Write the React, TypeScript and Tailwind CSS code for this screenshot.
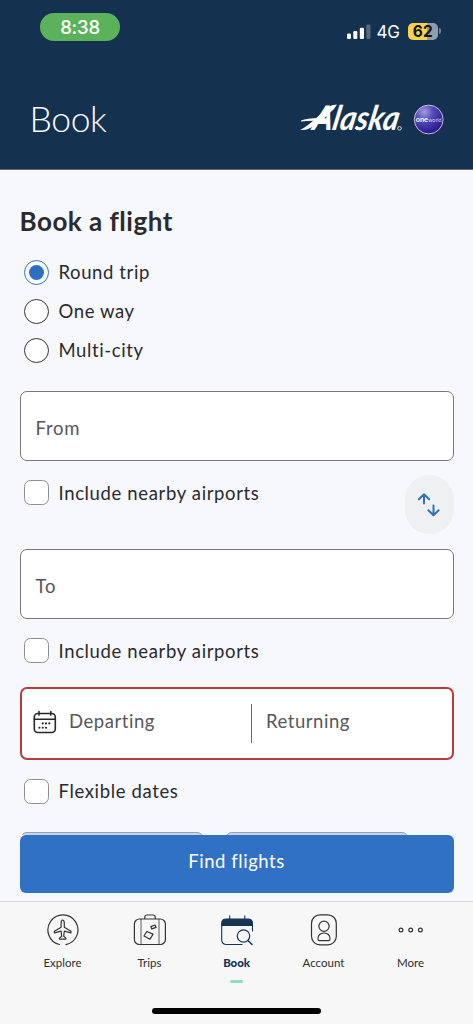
import React from 'react';

function StatusBar() {
  return (
    <div className="flex h-[64px] items-start justify-between pl-[40px] pr-[32px] pt-[13px]">
      <div className="flex h-[28px] w-[80px] items-center justify-center rounded-full bg-[#5bb25a] pt-[1px] font-['Inter'] text-[18.5px] font-medium tracking-[-0.2px] text-white">
        8:38
      </div>
      <div className="flex items-center pt-[7px]">
        <svg width="24" height="16" viewBox="0 0 24 16" className="mt-[1px]">
          <rect x="0" y="9.5" width="4" height="5.5" rx="1.2" fill="#fff" />
          <rect x="6.3" y="7" width="4" height="8" rx="1.2" fill="#fff" />
          <rect x="12.8" y="3.8" width="4.2" height="11.2" rx="1.2" fill="#fff" />
          <rect x="19.3" y="0.5" width="4.2" height="14.5" rx="1.2" fill="#fff" opacity=".28" />
        </svg>
        <span className="ml-[6px] mt-[2px] w-[25px] font-['Inter'] text-[17px] leading-[20px] tracking-[-0.2px] text-white">4G</span>
        <div className="ml-[6px] flex h-[17px] w-[30.5px] items-center justify-center rounded-[5px] bg-[linear-gradient(90deg,#f6d34b_62%,#929da9_62%)] pt-[1px] font-['Inter'] text-[15.5px] font-bold leading-none text-[#111]">
          62
        </div>
        <div className="ml-[1px] h-[6px] w-[2px] rounded-r-full bg-[#71808f]" />
      </div>
    </div>
  );
}

function Logo() {
  return (
    <svg width="146" height="60" viewBox="0 -10 146 60" className="-my-[10px] shrink-0">
      <defs>
        <radialGradient id="globe" cx="35%" cy="24%" r="80%">
          <stop offset="0" stopColor="#a49ddf" />
          <stop offset=".4" stopColor="#5548b6" />
          <stop offset="1" stopColor="#221389" />
        </radialGradient>
      </defs>
      <path d="M0 30 C10 25 19 15 27 8 Q32 4.6 37 4.6 L34 9 C26 16 18 26 6 29.8Z" fill="#fff" />
      <path d="M1 20.5 Q10 16.8 30 18.5 V22 Q15 20 1 21.5Z" fill="#fff" />
      <text transform="translate(11.5 29.8) skewX(-11)" x="0" y="0" textLength="86" lengthAdjust="spacingAndGlyphs" fontFamily="Lato" fontSize="34" fontStyle="italic" fontWeight="700" fill="#fff">
        Alaska
      </text>
      <circle cx="99.5" cy="28.3" r="1.8" fill="none" stroke="#fff" strokeWidth=".8" />
      <circle cx="128.7" cy="19.5" r="14.4" fill="url(#globe)" stroke="#c3bfdf" strokeWidth="1" />
      <text x="115.8" y="21.5" textLength="12.2" lengthAdjust="spacingAndGlyphs" fontFamily="Lato" fontSize="6.5" fontWeight="700" fill="#fff">one</text>
      <text x="128.2" y="21.5" textLength="13.4" lengthAdjust="spacingAndGlyphs" fontFamily="Lato" fontSize="6.5" fill="#d4d0f3">world</text>
    </svg>
  );
}

function Radio({ label, checked = false }: { label: string; checked?: boolean }) {
  return (
    <label className="flex h-[39px] items-center gap-[10px] pl-[4px]">
      <span className={`flex size-[25px] items-center justify-center rounded-full border-[1.5px] bg-white ${checked ? 'border-[#3373bf]' : 'border-[#343437]'}`}>
        {checked && <span className="size-[15px] rounded-full bg-[#2d6fc3]" />}
      </span>
      <span className="text-[18.5px] leading-[24px] tracking-[0.6px] text-[#2b2b2e]">{label}</span>
    </label>
  );
}

function Check({ label }: { label: string }) {
  return (
    <label className="flex h-[25px] items-center gap-[10px] pl-[4px]">
      <span className="size-[25px] rounded-[6.5px] border border-[#8d8e93] bg-white" />
      <span className="text-[18.5px] leading-[24px] tracking-[0.64px] text-[#2b2b2e]">{label}</span>
    </label>
  );
}

function Field({ label }: { label: string }) {
  return (
    <div className="flex h-[70px] items-center rounded-[7px] border-[1.5px] border-[#77787d] bg-white px-[15px] pt-[5px] text-[18.5px] tracking-[0.75px] text-[#56575b]">
      {label}
    </div>
  );
}

function CalendarIcon() {
  return (
    <svg width="24" height="24" viewBox="0 0 24 24" fill="none" stroke="#28282b" strokeWidth="1.6" strokeLinecap="round" className="-mt-[2px]">
      <rect x="1.3" y="3.5" width="21" height="19" rx="3.5" />
      <path d="M1.3 9.2h21M6 1.5v3.6M17.8 1.5v3.6" />
      <path d="M9.7 13.4h.01M13 13.4h.01M16.3 13.4h.01M6.4 17.7h.01M9.7 17.7h.01M13 17.7h.01" strokeWidth="2.1" />
    </svg>
  );
}

function ExploreIcon() {
  return (
    <svg width="34" height="34" viewBox="0 0 34 34" fill="none" stroke="#343437" strokeWidth="1.2" strokeLinejoin="round">
      <path d="M13.4 31.5 A15 15 0 1 1 20 31.6" strokeLinecap="round" />
      <path d="M16.7 7c1.1 0 1.6 1.8 1.6 3.6v3.6l6.7 4v1.6l-6.7-1.6-.6 5 2.2 1.9v1h-6.4v-1l2.2-1.9-.6-5-6.7 1.6v-1.6l6.7-4v-3.6c0-1.8.5-3.6 1.6-3.6Z" />
    </svg>
  );
}

function TripsIcon() {
  return (
    <svg width="34" height="34" viewBox="0 0 34 34" fill="none" stroke="#343437" strokeWidth="1.2">
      <rect x="1.4" y="6" width="31" height="25.5" rx="5" />
      <path d="M11.8 6V4a2 2 0 0 1 2-2h6.4a2 2 0 0 1 2 2v2" />
      <path d="M8 6v25.5M26 6v25.5" strokeWidth=".8" />
      <path d="M13.8 18.5l6.2 2.6-3 5.2-6-3.3ZM17.8 13.6l4.2-1.6 1.1 2.4-4.3 1.5Z" strokeLinejoin="round" />
    </svg>
  );
}

function BookIcon() {
  return (
    <svg width="34" height="34" viewBox="0 0 34 34" fill="none" stroke="#163454" strokeWidth="1.1" strokeLinecap="round">
      <path d="M1.7 12.5V10.5Q1.7 6 6.2 6H28Q32.5 6 32.5 10.5V12.5Z" fill="#163454" />
      <path d="M9.7 2.8V6M24.8 2.8V6M1.7 12v14.5q0 5 5 5H22M32.5 12v6" />
      <circle cx="23.5" cy="23" r="6.2" strokeWidth="1.2" />
      <path d="M28 27.5l4 4" strokeWidth="1.5" />
    </svg>
  );
}

function AccountIcon() {
  return (
    <svg width="34" height="34" viewBox="0 0 34 34" fill="none" stroke="#343437" strokeWidth="1.2">
      <rect x="4.5" y="1.8" width="24.8" height="30" rx="8.5" />
      <circle cx="17" cy="13.2" r="5.1" />
      <path d="M11 26.3c-.3-3.8 1.8-6.3 6-6.3s6.3 2.5 6 6.3c-.1.9-.6 1.3-1.4 1.3h-9.2c-.8 0-1.3-.4-1.4-1.3Z" />
    </svg>
  );
}

function MoreIcon() {
  return (
    <svg width="34" height="34" viewBox="0 0 34 34" fill="none" stroke="#343437" strokeWidth="1.2">
      <circle cx="7" cy="17" r="1.9" />
      <circle cx="16.7" cy="17" r="1.9" />
      <circle cx="26.4" cy="17" r="1.9" />
    </svg>
  );
}

const tabs = [
  { label: 'Explore', icon: <ExploreIcon /> },
  { label: 'Trips', icon: <TripsIcon /> },
  { label: 'Book', icon: <BookIcon />, active: true },
  { label: 'Account', icon: <AccountIcon /> },
  { label: 'More', icon: <MoreIcon /> },
];

export default function App() {
  return (
    <div className="flex h-[1024px] w-[473px] flex-col overflow-hidden bg-[#f6f8fb] font-['Lato','Liberation_Sans',sans-serif]">
      <header className="h-[170px] shrink-0 border-b border-[#5e6c7e] bg-[#14314f]">
        <StatusBar />
        <div className="flex items-center justify-between pl-[29.5px] pr-[27px] pt-[36px]">
          <h1 className="-mt-[3px] text-[35.5px] font-light leading-[40px] tracking-[-0.4px] text-white">Book</h1>
          <Logo />
        </div>
      </header>

      <main className="flex h-[731px] shrink-0 flex-col overflow-hidden px-[19.5px]">
        <h2 className="mt-[33px] h-[49.5px] text-[26px] font-bold leading-[36px] tracking-[0.5px] text-[#2b2b2e]">Book a flight</h2>
        <div className="h-[117px]">
          <Radio label="Round trip" checked />
          <Radio label="One way" />
          <Radio label="Multi-city" />
        </div>
        <div className="mt-[21.5px]">
          <Field label="From" />
        </div>
        <div className="flex h-[88px] justify-between pt-[14px]">
          <div className="pt-[5px]">
            <Check label="Include nearby airports" />
          </div>
          <button className="flex h-[59px] w-[49px] items-center justify-center rounded-full bg-[#eff0f2]">
            <svg width="24" height="26" viewBox="0 0 24 26" fill="none" stroke="#3272b9" strokeWidth="2" strokeLinecap="round" strokeLinejoin="round">
              <path d="M7 11.5V2.5M1.9 7.3L7 2.3l5.1 5M16.5 13.5v9.5M11.4 18.2l5.1 5 5.1-5" />
            </svg>
          </button>
        </div>
        <Field label="To" />
        <div className="mt-[19px]">
          <Check label="Include nearby airports" />
        </div>
        <div className="mt-[24px] flex h-[72.5px] shrink-0 items-center rounded-[7px] border-[2.5px] border-[#b93b3d] bg-white pl-[11.5px] text-[18.5px] tracking-[0.55px] text-[#56575b]">
          <CalendarIcon />
          <span className="ml-[12px] w-[182px] pb-[3px]">Departing</span>
          <span className="h-[39px] w-px bg-[#66676c]" />
          <span className="ml-[14px] pb-[3px]">Returning</span>
        </div>
        <div className="mt-[19px]">
          <Check label="Flexible dates" />
        </div>
        <div className="mt-[28px] flex h-[3px] shrink-0 gap-[21px] overflow-hidden">
          <div className="h-[30px] w-[184.5px] rounded-[7px] border border-[#9b9fa9] bg-[#c9d6e6]" />
          <div className="h-[30px] w-[184px] rounded-[7px] border border-[#9b9fa9] bg-[#c9d6e6]" />
        </div>
        <button className="h-[58px] w-full shrink-0 rounded-[6px] bg-[#3071c3] pb-[3px] text-[18.5px] tracking-[0.55px] text-white">
          Find flights
        </button>
      </main>

      <nav className="flex flex-1 flex-col border-t border-[#d6d8dc] bg-[#f7f7f8]">
        <div className="flex h-[106px] px-[19px] pt-[11px]">
          {tabs.map((tab) => (
            <div key={tab.label} className="flex w-[87px] flex-col items-center">
              {tab.icon}
              <span className={`mt-[8px] text-[11.5px] leading-[16px] ${tab.active ? 'font-black tracking-[-0.1px] text-[#163454]' : 'text-[#2f2f32]'}`}>{tab.label}</span>
              {tab.active && <span className="mt-[9px] h-[3px] w-[13px] rounded-full bg-[#92dcc0]" />}
            </div>
          ))}
        </div>
        <div className="mx-auto h-[6px] w-[169px] rounded-full bg-black" />
      </nav>
    </div>
  );
}
